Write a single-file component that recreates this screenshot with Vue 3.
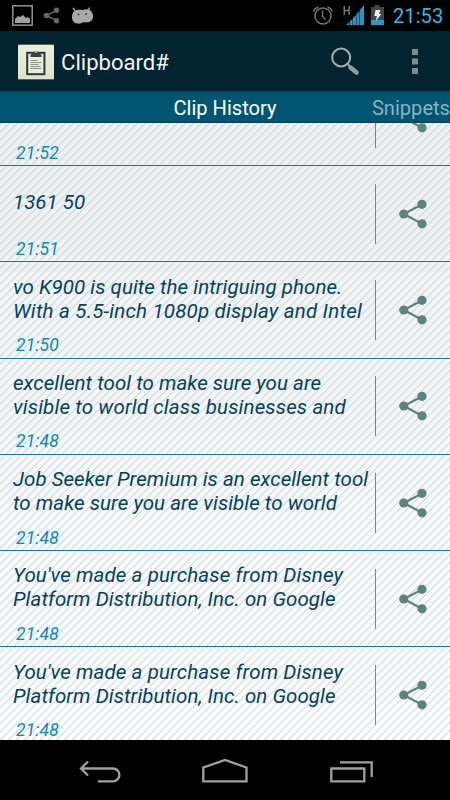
<script setup>
const clips = [
  { lines: [], time: '21:52' },
  { lines: [{ text: '1361 50', track: 0 }], time: '21:51' },
  {
    lines: [
      { text: 'vo K900 is quite the intriguing phone.', track: 0.05 },
      { text: 'With a 5.5-inch 1080p display and Intel', track: 0.21 },
    ],
    time: '21:50',
  },
  {
    lines: [
      { text: 'excellent tool to make sure you are', track: 0.03 },
      { text: 'visible to world class businesses and', track: 0.14 },
    ],
    time: '21:48',
  },
  {
    lines: [
      { text: 'Job Seeker Premium is an excellent tool', track: 0.04 },
      { text: 'to make sure you are visible to world', track: 0.05 },
    ],
    time: '21:48',
  },
  {
    lines: [
      { text: "You've made a purchase from Disney", track: 0.12 },
      { text: 'Platform Distribution, Inc. on Google', track: 0.06 },
    ],
    time: '21:48',
  },
  {
    lines: [
      { text: "You've made a purchase from Disney", track: 0.12 },
      { text: 'Platform Distribution, Inc. on Google', track: 0.06 },
    ],
    time: '21:48',
  },
]
</script>

<template>
  <div class="screen">
    <header class="status">
      <svg class="notifications" width="100" height="31" viewBox="0 0 100 31">
        <rect x="12.8" y="5.8" width="19.4" height="19.4" fill="none" stroke="#929292" stroke-width="1.5" />
        <path d="M15 23v-4l3-3 2 1 3-2 3 3 2-1 2 2v4z" fill="#a2a2a2" />
        <path d="M56.5 10.5L46.5 15.5L56.5 20.5" fill="none" stroke="#606060" stroke-width="1.4" />
        <g fill="#666"><circle cx="56.5" cy="10.3" r="2.7" /><circle cx="46.5" cy="15.5" r="2.8" /><circle cx="56.5" cy="20.8" r="2.7" /></g>
        <path d="M73 8l2.5 3.3M89.500 7.500l-1.500 3.500" stroke="#a8a8a8" stroke-width="1.3" />
        <path d="M72 17c0-5 3-7.300 7-7.300 3 0 4 .6 6-.2 4-1.200 7.500 1.500 8 6 .4 4-2 6.300-5 6.800-2 .4-4-.3-6 .4-1.500.8-3 1.300-5 .9-3-.4-5-2.800-5-6.600z" fill="#a8a8a8" />
        <circle cx="78.500" cy="14.500" r=".8" /><circle cx="86" cy="14" r=".8" />
      </svg>
      <div class="system">
        <svg width="76" height="31" viewBox="312 0 76 31">
          <g fill="none" stroke="#777" stroke-width="1.400">
            <circle cx="323" cy="16" r="8" />
            <path d="M322.500 10.500v6l3 3M313.500 11.500a8 8 0 0 1 5-4.500M332.500 11.500a8 8 0 0 0-5-4.500" />
          </g>
          <path d="M344.300 6v9M349.200 6v9M344.300 10.500h5" stroke="#757575" stroke-width="1.500" fill="none" />
          <g fill="#2694c0">
            <path d="M346 25l3-2.800V25z" /><path d="M349.600 21.500l3-2.700v6.200h-3z" /><path d="M353 18l3-3v10H353z" /><path d="M356.400 14l3-3v14h-3z" /><path d="M359.800 10l4.200-5v20h-4.200z" />
          </g>
          <path d="M371 7h3.500V5h5v2h4.500v13h-13z" fill="#454545" />
          <path d="M371 20h13v5h-13z" fill="#2a98c4" />
          <path d="M375.500 10h5l-1.500 4h2.300l-5.300 7 .8-5h-2.500z" fill="#eee" />
        </svg>
        <span class="clock">21:53</span>
      </div>
    </header>

    <div class="actionbar">
      <svg class="logo" width="36" height="36" viewBox="0 0 36 36">
        <defs>
          <linearGradient id="tile" x1="0" y1="0" x2="0" y2="1">
            <stop offset="0" stop-color="#eceedd" /><stop offset="1" stop-color="#dde3c6" />
          </linearGradient>
        </defs>
        <rect width="36" height="36" rx="1" fill="#596456" />
        <rect y="1" width="36" height="34" rx="1" fill="url(#tile)" />
        <rect x="9.200" y="8.800" width="17.200" height="21.400" fill="#e8eadb" stroke="#303436" stroke-width="2" />
        <path d="M12.500 13v-2l2-2.200h1.500l.6-1.600h2.800l.6 1.600h1.500l2 2.200v2z" fill="#3c4142" />
        <circle cx="18" cy="7.800" r="1.300" fill="#b5b9ae" />
        <path d="M12.500 16.500h7M12.500 18.500h11M12.500 20.500h8M12.500 22.500h10M12.500 24.500h11" stroke="#85897f" stroke-width=".9" />
      </svg>
      <h1>Clipboard#</h1>
      <svg class="tools" width="96" height="61" viewBox="326 0 96 61">
        <path d="M350.500 36.500l6 5" stroke="#929da1" stroke-width="4.600" stroke-linecap="round" />
        <path d="M346.500 32l4 4" stroke="#929da1" stroke-width="2.200" />
        <circle cx="341.200" cy="26.500" r="9" fill="none" stroke="#a3acaf" stroke-width="2.100" />
        <g fill="#7d8c92"><rect x="412" y="18" width="6" height="6" /><rect x="412" y="27.500" width="6" height="6" /><rect x="412" y="37" width="6" height="6" /></g>
      </svg>
    </div>

    <nav class="tabs">
      <span class="spacer"></span>
      <span class="active">Clip History</span>
      <span class="next">Snippets</span>
    </nav>

    <main class="list">
      <div class="rows">
        <article v-for="(clip, i) in clips" :key="i" class="row">
          <div class="body">
            <div class="text">
              <p v-for="line in clip.lines" :key="line.text" :style="{ letterSpacing: line.track + 'px' }">{{ line.text }}</p>
            </div>
            <time>{{ clip.time }}</time>
          </div>
          <div class="share">
            <svg width="30" height="30" viewBox="0 0 30 30">
              <path d="M24 5.500L5.800 15L24 24.700" fill="none" stroke="#5b8480" stroke-width="2.200" />
              <g fill="#5b8480"><circle cx="24" cy="5.300" r="4.600" /><circle cx="5.800" cy="15" r="4.600" /><circle cx="24" cy="24.800" r="4.600" /></g>
            </svg>
          </div>
        </article>
      </div>
    </main>

    <footer class="navbar">
      <svg width="450" height="60" viewBox="0 740 450 60" fill="none" stroke="#a0a0a0" stroke-width="2.300">
        <path d="M88 761.500l-7 7 7 7M81 768.500h32a6.400 6.400 0 0 1 0 12.800h-15" />
        <path d="M203.300 781.300v-13.800l21.700-7.500 21.500 7.500v13.800z" />
        <path d="M331.300 768.500h33v12.800h-33zM340 762.300h31.700v14.700" />
      </svg>
    </footer>
  </div>
</template>

<style>
body {
  margin: 0;
  background: #000;
}
</style>

<style scoped>
.screen {
  width: 450px;
  height: 800px;
  display: flex;
  flex-direction: column;
  overflow: hidden;
  background: #000;
  font-family: Roboto, sans-serif;
}
svg {
  display: block;
  flex: none;
}
.status {
  height: 31px;
  display: flex;
  justify-content: space-between;
}
.system {
  display: flex;
  gap: 5px;
  padding-right: 7px;
}
.clock {
  width: 50px;
  font-size: 20.200px;
  line-height: 32px;
  color: #33b5e5;
  white-space: nowrap;
}
.actionbar {
  height: 60px;
  display: flex;
  align-items: center;
  background: #022430;
}
.logo {
  margin: 1px 7px 0 18px;
}
h1 {
  flex: 1;
  margin: 1px 0 0;
  font-size: 22.100px;
  line-height: 30px;
  font-weight: 400;
  color: #f3f3f3;
}
.tools {
  margin-right: 28px;
}
.tabs {
  height: 32px;
  box-sizing: border-box;
  display: grid;
  grid-template-columns: 1fr auto 1fr;
  border-bottom: 1px solid #003f60;
  background: linear-gradient(#004a60, #005671 5px);
  font-size: 20.100px;
  line-height: 34px;
  white-space: nowrap;
}
.active {
  color: #fff;
}
.next {
  text-align: right;
  color: #8db1bf;
}
.list {
  height: 617px;
  overflow: hidden;
  background:
    linear-gradient(135deg, #cbd7dab0 12.5%, transparent 12.5% 50%, #cbd7dab0 50% 62.5%, transparent 62.5%) 0 0 / 8px 8px,
    linear-gradient(#eeeff0, #fcfdfe);
}
.rows {
  margin-top: -53.100px;
}
.row {
  height: 96.250px;
  box-sizing: border-box;
  display: flex;
  align-items: center;
  border-bottom: 1px solid #1c79ab;
}
.body {
  width: 375px;
  height: 95px;
  box-sizing: border-box;
  padding: 12px 0 0 13px;
  font-style: italic;
  white-space: nowrap;
}
.text {
  height: 48px;
  display: flex;
  flex-direction: column;
  justify-content: center;
  color: #044264;
  font-size: 20.500px;
  line-height: 24px;
}
p {
  margin: 0;
}
p:only-child {
  margin-bottom: 1px;
}
time {
  display: block;
  margin: 11.500px 0 0 3px;
  font-size: 17.500px;
  line-height: 22px;
  letter-spacing: 0.1px;
  color: #098abc;
}
.share {
  height: 60px;
  display: flex;
  align-items: center;
  padding-left: 22px;
  border-left: 1px solid #2f9fc8;
}
.navbar {
  height: 60px;
}
</style>
